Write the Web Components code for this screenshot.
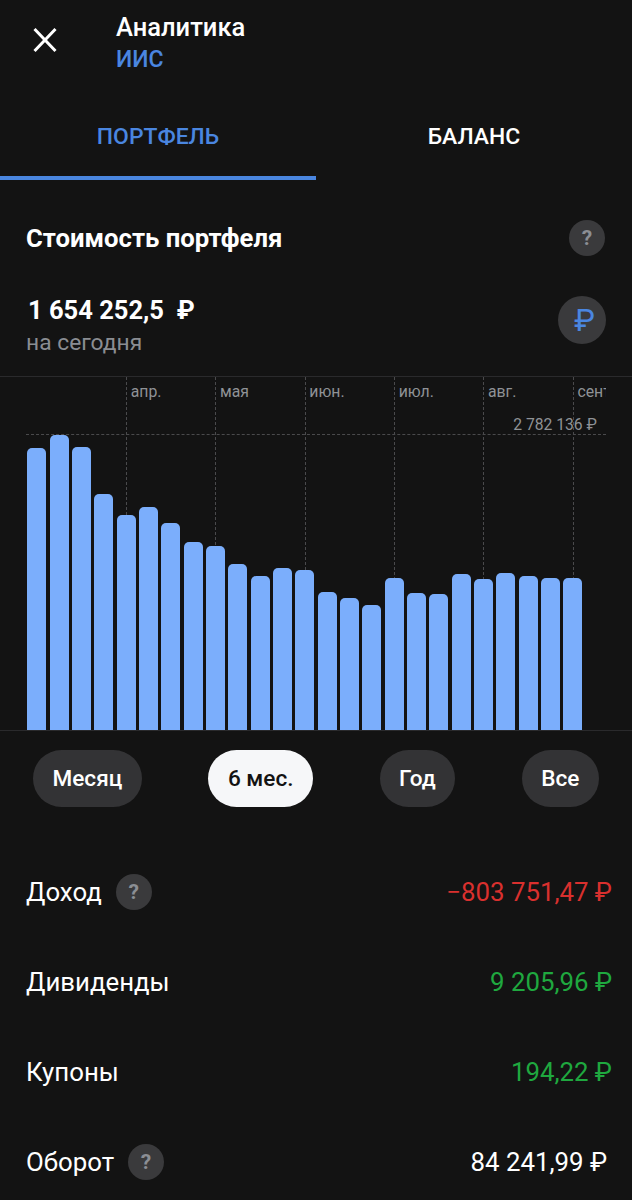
<!DOCTYPE html>
<html lang="ru">
<head>
<meta charset="utf-8">
<title>Аналитика</title>
<style>
  html, body { margin: 0; background: #131313; }
  body { font-family: Roboto, "Liberation Sans", sans-serif; color: #fff; width: 632px; height: 1200px; overflow: hidden; }
</style>
</head>
<body>
<app-header title="Аналитика" subtitle="ИИС"></app-header>
<tab-bar active="ПОРТФЕЛЬ" other="БАЛАНС"></tab-bar>
<portfolio-summary></portfolio-summary>
<bar-chart></bar-chart>
<range-picker></range-picker>
<stat-list>
  <stat-row label="Доход" value="−803 751,47 ₽" tone="red" help></stat-row>
  <stat-row label="Дивиденды" value="9 205,96 ₽" tone="green"></stat-row>
  <stat-row label="Купоны" value="194,22 ₽" tone="green"></stat-row>
  <stat-row label="Оборот" value="84 241,99 ₽" help inset></stat-row>
</stat-list>

<script>
class HelpBadge extends HTMLElement {
  constructor() {
    super();
    const shadow = this.attachShadow({ mode: "open" });
    shadow.innerHTML = `
      <style>
        :host {
          display: flex;
          align-items: center;
          justify-content: center;
          flex: none;
          width: 36px;
          height: 36px;
          border-radius: 50%;
          background: #3a3a3c;
          color: #8b8e94;
          font-size: 21px;
          font-weight: 700;
          line-height: 1;
        }
      </style>
      ?
    `;
  }
}
customElements.define("help-badge", HelpBadge);

class AppHeader extends HTMLElement {
  constructor() {
    super();
    const shadow = this.attachShadow({ mode: "open" });
    const title = this.getAttribute("title") || "";
    const subtitle = this.getAttribute("subtitle") || "";
    shadow.innerHTML = `
      <style>
        :host {
          display: flex;
          align-items: flex-start;
          height: 96px;
          box-sizing: border-box;
          padding: 12px 0 0 32px;
        }
        svg { display: block; margin-top: 15px; width: 26px; height: 26px; flex: none; }
        .text { margin-left: 58px; }
        .title { font-size: 25.5px; font-weight: 500; line-height: 30px; color: #fff; }
        .subtitle { font-size: 23px; font-weight: 500; line-height: 36px; color: #4a86e0; }
      </style>
      <svg viewBox="0 0 26 26" fill="none" stroke="#fff" stroke-width="3">
        <path d="M2.5 2 L23.5 24 M23.5 2 L2.5 24"/>
      </svg>
      <div class="text">
        <div class="title">${title}</div>
        <div class="subtitle">${subtitle}</div>
      </div>
    `;
  }
}
customElements.define("app-header", AppHeader);

class TabBar extends HTMLElement {
  constructor() {
    super();
    const shadow = this.attachShadow({ mode: "open" });
    shadow.innerHTML = `
      <style>
        :host {
          display: grid;
          grid-template-columns: 316px 316px;
          height: 84px;
        }
        .tab {
          display: flex;
          align-items: center;
          justify-content: center;
          box-sizing: border-box;
          font-size: 22.9px;
          font-weight: 500;
          color: #fff;
          border-bottom: 4px solid transparent;
        }
        .tab.on { color: #4a86e0; border-bottom-color: #4a86e0; }
      </style>
      <div class="tab on">${this.getAttribute("active")}</div>
      <div class="tab">${this.getAttribute("other")}</div>
    `;
  }
}
customElements.define("tab-bar", TabBar);

class PortfolioSummary extends HTMLElement {
  constructor() {
    super();
    const shadow = this.attachShadow({ mode: "open" });
    shadow.innerHTML = `
      <style>
        :host {
          display: block;
          height: 196px;
          box-sizing: border-box;
          padding: 40px 26px 0 26px;
        }
        .head { display: flex; justify-content: space-between; align-items: center; height: 36px; margin-right: 1px; }
        .head h2 { margin: -1px 0 0; font-size: 25.7px; font-weight: 700; line-height: 36px; }
        .body { display: flex; justify-content: space-between; align-items: flex-start; margin-top: 40px; height: 48px; }
        .sum { margin-left: 2px; margin-top: -1px; font-size: 25.5px; font-weight: 700; line-height: 30px; white-space: pre; }
        .note { font-size: 22.8px; line-height: 28px; color: #8a8d92; margin-top: 4px; }
        .rub {
          display: flex;
          align-items: center;
          justify-content: center;
          box-sizing: border-box;
          width: 48px;
          height: 48px;
          padding-left: 5px;
          border-radius: 50%;
          background: #3a3a3c;
          color: #4a86e0;
          font-size: 31px;
          font-weight: 400;
          line-height: 1;
        }
      </style>
      <div class="head">
        <h2>Стоимость портфеля</h2>
        <help-badge></help-badge>
      </div>
      <div class="body">
        <div>
          <div class="sum">1 654 252,5  ₽</div>
          <div class="note">на сегодня</div>
        </div>
        <div class="rub">₽</div>
      </div>
    `;
  }
}
customElements.define("portfolio-summary", PortfolioSummary);

// bar tops measured from the screenshot, 25 weeks
const BAR_TOPS = [448, 434.7, 447.3, 494.3, 515.3, 507, 522.7, 541.7, 545.7, 563.7, 576, 568, 570,
  592.3, 597.7, 605, 578.3, 593.3, 593.7, 573.7, 579, 572.7, 576.3, 578, 578];
const BAR_BOTTOM = 730;
const MONTHS = [["апр.", 126], ["мая", 215.3], ["июн.", 304.6], ["июл.", 394], ["авг.", 483.3], ["сент.", 572.7]];

class BarChart extends HTMLElement {
  constructor() {
    super();
    const shadow = this.attachShadow({ mode: "open" });
    const bars = BAR_TOPS.map(function (top) {
      return `<i style="height:${(BAR_BOTTOM - top).toFixed(1)}px"></i>`;
    }).join("");
    const months = MONTHS.map(function (m) {
      return `<div class="vline" style="left:${m[1]}px"></div><div class="month" style="left:${m[1] + 4.7}px">${m[0]}</div>`;
    }).join("");
    shadow.innerHTML = `
      <style>
        :host {
          display: block;
          position: relative;
          box-sizing: border-box;
          height: 355px;
          border-top: 1px solid #2a2a2c;
          border-bottom: 1px solid #2a2a2c;
        }
        .grid { position: absolute; left: 0; top: 0; width: 606px; height: 353px; overflow: hidden; }
        .vline { position: absolute; top: 0; bottom: 0; width: 0; border-left: 1px dashed #4a4a4c; }
        .hline { position: absolute; left: 26px; right: 0; top: 57px; border-top: 1px dashed #4a4a4c; }
        .month { position: absolute; top: 5px; font-size: 15.8px; line-height: 20px; color: #8f9296; }
        .max { position: absolute; right: 9px; top: 38px; font-size: 15.7px; line-height: 20px; color: #8f9296; }
        .bars {
          position: absolute;
          left: 27.3px;
          bottom: 0;
          display: flex;
          align-items: flex-end;
          gap: 3.33px;
        }
        .bars i { display: block; width: 19px; background: #7baefc; border-radius: 5px 5px 0 0; }
      </style>
      <div class="grid">
        ${months}
        <div class="hline"></div>
        <div class="max">2 782 136 ₽</div>
      </div>
      <div class="bars">${bars}</div>
    `;
  }
}
customElements.define("bar-chart", BarChart);

class RangePicker extends HTMLElement {
  constructor() {
    super();
    const shadow = this.attachShadow({ mode: "open" });
    shadow.innerHTML = `
      <style>
        :host {
          display: flex;
          justify-content: space-between;
          align-items: center;
          box-sizing: border-box;
          height: 76px;
          padding: 19px 33px 0 33px;
        }
        .pill {
          display: flex;
          align-items: center;
          height: 57px;
          padding: 0 19.5px;
          border-radius: 28.5px;
          background: #333335;
          color: #fff;
          font-size: 22.6px;
          font-weight: 500;
        }
        .pill.on { background: #f6f7f9; color: #131313; }
      </style>
      <div class="pill">Месяц</div>
      <div class="pill on">6 мес.</div>
      <div class="pill">Год</div>
      <div class="pill">Все</div>
    `;
  }
}
customElements.define("range-picker", RangePicker);

class StatList extends HTMLElement {
  constructor() {
    super();
    const shadow = this.attachShadow({ mode: "open" });
    shadow.innerHTML = `
      <style>
        :host { display: block; padding-top: 40px; }
      </style>
      <slot></slot>
    `;
  }
}
customElements.define("stat-list", StatList);

class StatRow extends HTMLElement {
  constructor() {
    super();
    const shadow = this.attachShadow({ mode: "open" });
    const help = this.hasAttribute("help") ? "<help-badge></help-badge>" : "";
    const tone = this.getAttribute("tone") || "";
    shadow.innerHTML = `
      <style>
        :host {
          display: flex;
          align-items: center;
          height: 90px;
          box-sizing: border-box;
          padding: 0 20px 0 26px;
          font-size: 25.8px;
        }
        :host([inset]) { padding-right: 25px; }
        .label { display: flex; align-items: center; gap: 14px; }
        .value { margin-left: auto; }
        .value.red { color: #d9302e; }
        .value.green { color: #1fa83f; }
      </style>
      <div class="label"><span>${this.getAttribute("label")}</span>${help}</div>
      <div class="value ${tone}">${this.getAttribute("value")}</div>
    `;
  }
}
customElements.define("stat-row", StatRow);
</script>
</body>
</html>
